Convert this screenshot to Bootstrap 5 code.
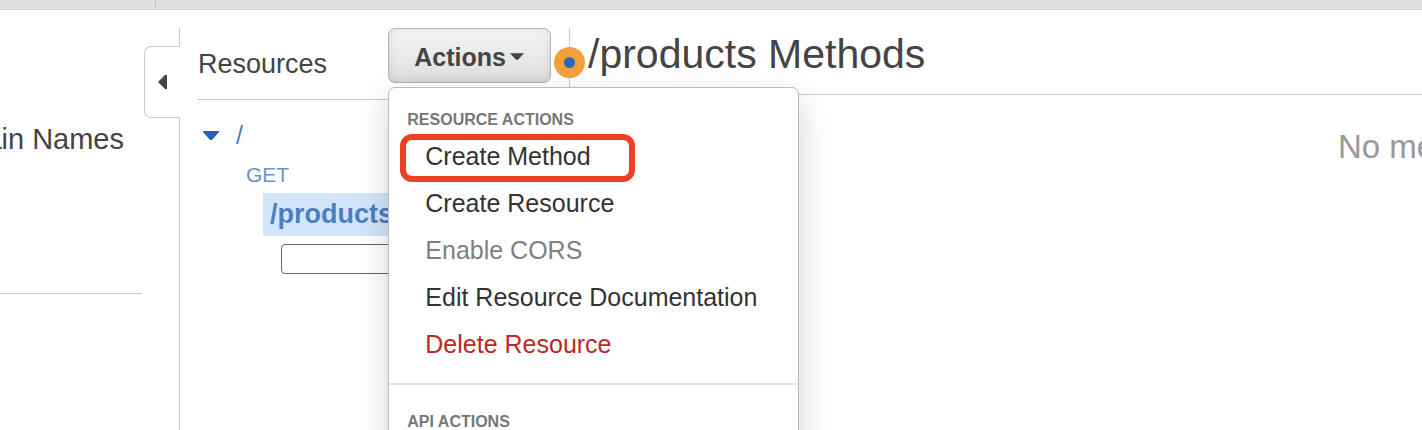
<!DOCTYPE html>
<html lang="en">
<head>
<meta charset="utf-8">
<meta name="viewport" content="width=device-width, initial-scale=1">
<title>API Gateway - Resources</title>
<link rel="stylesheet" href="https://cdn.jsdelivr.net/npm/bootstrap@5.3.0/dist/css/bootstrap.min.css">
<style>
body { font-family: "Liberation Sans", Arial, sans-serif; color: #444; line-height: 1.2; }
.topbar { height: 10px; background: #e0e0e0; border-bottom: 1px solid #d0d0d0; }
.topbar-lead { width: 156px; height: 8px; border-right: 1px solid #c4c4c4; }
.workspace { padding-top: 18px; }
.side { width: 180px; border-right: 1px solid #c8c8c8; }
.side-link { font-size: 29px; line-height: 36px; color: #444; padding: 93px 55px 0 0; }
.side-rule { margin: 136px 37px 0 0; border-top: 1px solid #c8c8c8; }
.collapse-tab { top: 18px; right: -1px; width: 36px; height: 72px; background: #fff; border: 1px solid #c8c8c8; border-right: 0; border-radius: 7px 0 0 7px; padding: 0 0 0 13px; }
.tree-pane { width: 390px; border-right: 1px solid #c8c8c8; padding: 0 18px; }
.tree-head { height: 72px; border-bottom: 1px solid #c8c8c8; }
.tree-title { font-size: 27px; line-height: 32px; padding-top: 20px; }
.btn-actions { height: 55px; font-size: 25px; line-height: 32px; font-weight: 700; color: #444; border: 1px solid #b4b4b4; border-radius: 7px; padding: 2px 26px 0 25px; background: linear-gradient(#f5f5f5, #dedede); box-shadow: inset 0 0 10px rgba(0,0,0,.1); }
.btn-actions:hover, .btn-actions.show { color: #444; background: linear-gradient(#f5f5f5, #dedede); border-color: #b4b4b4; }
.btn-actions::after { display: none; }
.actions-menu { top: 100%; left: 0; width: 411px; margin-top: 4px; padding: 20px 0; border: 1px solid #bbb; border-radius: 7px; box-shadow: 0 12px 32px rgba(0,0,0,.18); }
.actions-menu .dropdown-header { font-size: 16px; line-height: 24px; font-weight: 700; color: #777; padding: 0 18px 1px; }
.actions-menu .dropdown-item { font-size: 25px; line-height: 47px; color: #333; padding: 0 36px; }
.actions-menu .dropdown-item.disabled { color: #808080; }
.actions-menu .dropdown-item.danger-item { color: #bb2a1e; }
.actions-menu .dropdown-divider { margin: 15px 0 25px; border-top: 2px solid #e2e2e2; opacity: 1; }
.mark-frame { top: 1px; left: 11px; width: 235px; height: 48px; border: 6px solid #ee4026; border-radius: 12px; pointer-events: none; }
.tree-list { padding-top: 15px; }
.tree-link { color: #4a7fc0; font-size: 25px; line-height: 40px; }
.tree-root { padding-left: 5px; gap: 17px; }
.tree-get { font-size: 21px; color: #6b94c4; margin-left: 48px; }
.tree-selected { background: #d3e5fb; font-size: 27px; line-height: 43px; font-weight: 700; margin: -2px 0 8px 65px; padding-left: 7px; }
.tree-input { height: 30px; border: 1px solid #666; border-radius: 4px; margin-left: 83px; width: 220px; }
.main-pane { padding-left: 18px; }
.main-title { font-size: 41px; line-height: 52px; height: 67px; border-bottom: 1px solid #c8c8c8; }
.empty-note { font-size: 33px; line-height: 40px; color: #999; padding: 32px 0 0 750px; }
.pulse-dot { top: 19px; left: -16px; width: 31px; height: 31px; border-radius: 50%; background: #f3a03c; }
.pulse-core { width: 11px; height: 11px; border-radius: 50%; background: #2b68b8; }
</style>
</head>
<body class="vh-100 overflow-hidden d-flex flex-column bg-white">
<header class="topbar flex-shrink-0"><div class="topbar-lead"></div></header>
<div class="workspace d-flex flex-grow-1">
  <nav class="side flex-shrink-0 position-relative" aria-label="API Gateway">
    <div class="overflow-hidden d-flex justify-content-end">
      <a href="#" class="side-link text-nowrap text-decoration-none">Domain Names</a>
    </div>
    <div class="side-rule"></div>
    <button type="button" class="collapse-tab position-absolute d-flex align-items-center" aria-label="Collapse navigation">
      <svg width="9" height="16" viewBox="0 0 9 16"><path d="M0 8 L7 1 H9 V15 H7Z" fill="#444"/></svg>
    </button>
  </nav>
  <section class="tree-pane flex-shrink-0">
    <div class="tree-head d-flex justify-content-between align-items-start">
      <h2 class="tree-title fw-normal mb-0">Resources</h2>
      <div class="dropdown">
        <button type="button" class="btn btn-actions dropdown-toggle show d-flex align-items-center gap-1" aria-expanded="true">Actions
          <svg width="14" height="9" viewBox="0 0 15 9"><path d="M0 1H15L8.5 8H6.5Z" fill="#444"/></svg>
        </button>
        <ul class="dropdown-menu actions-menu show">
          <li><h6 class="dropdown-header mb-0">RESOURCE ACTIONS</h6></li>
          <li class="position-relative"><a class="dropdown-item" href="#">Create Method</a><span class="mark-frame position-absolute"></span></li>
          <li><a class="dropdown-item" href="#">Create Resource</a></li>
          <li><a class="dropdown-item disabled" href="#" aria-disabled="true">Enable CORS</a></li>
          <li><a class="dropdown-item" href="#">Edit Resource Documentation</a></li>
          <li><a class="dropdown-item danger-item" href="#">Delete Resource</a></li>
          <li><hr class="dropdown-divider"></li>
          <li><h6 class="dropdown-header mb-0">API ACTIONS</h6></li>
        </ul>
      </div>
    </div>
    <div class="tree-list d-flex flex-column">
      <div class="tree-root d-flex align-items-center">
        <svg width="16" height="9" viewBox="0 0 16 9"><path d="M0 0H16V1L9 9H7L0 1Z" fill="#2563b8"/></svg>
        <a href="#" class="tree-link text-decoration-none">/</a>
      </div>
      <a href="#" class="tree-link tree-get text-decoration-none">GET</a>
      <a href="#" class="tree-link tree-selected text-decoration-none">/products</a>
      <input type="text" class="tree-input" aria-label="Method">
    </div>
  </section>
  <main class="main-pane flex-grow-1 position-relative">
    <h1 class="main-title fw-normal mb-0">/products Methods</h1>
    <div class="empty-note text-nowrap">No methods</div>
    <span class="pulse-dot position-absolute d-flex align-items-center justify-content-center"><span class="pulse-core"></span></span>
  </main>
</div>
<script src="https://cdn.jsdelivr.net/npm/bootstrap@5.3.0/dist/js/bootstrap.bundle.min.js"></script>
</body>
</html>
